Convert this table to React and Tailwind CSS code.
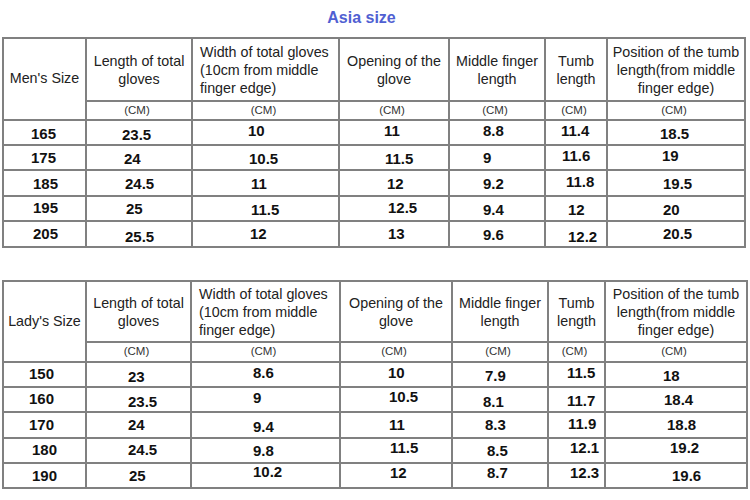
import React from 'react';

// each data cell: [value, padding-left, vertical nudge]
const men = {
  label: "Men's Size",
  cols: 'grid-cols-[81px_104px_145px_108px_94px_60px_136px]',
  rows: 'grid-rows-[61px_17px_23px_23px_24px_23px_24px]',
  data: [
    [['165', 27, 1], ['23.5', 35, 2], ['10', 55, -2], ['11', 44, -2], ['8.8', 33, -2], ['11.4', 15, -2], ['18.5', 52, 1]],
    [['175', 27, 0], ['24', 37, 1], ['10.5', 56, 1], ['11.5', 45, 1], ['9', 33, 0], ['11.6', 16, -2], ['19', 54, -2]],
    [['185', 29, 0], ['24.5', 38, 0], ['11', 58, 0], ['12', 47, 0], ['9.2', 33, 0], ['11.8', 20, -2], ['19.5', 55, 0]],
    [['195', 29, -1], ['25', 39, 0], ['11.5', 58, 1], ['12.5', 48, -1], ['9.4', 33, 1], ['12', 22, 1], ['20', 55, 1]],
    [['205', 29, -1], ['25.5', 38, 2], ['12', 57, -1], ['13', 48, -1], ['9.6', 33, 0], ['12.2', 22, 2], ['20.5', 55, -1]],
  ],
};

const lady = {
  label: "Lady's Size",
  cols: 'grid-cols-[81px_103px_147px_110px_94px_55px_140px]',
  rows: 'grid-rows-[59px_18px_23px_23px_24px_23px_23px]',
  data: [
    [['150', 25, -1], ['23', 41, 2], ['8.6', 61, -2], ['10', 47, -2], ['7.9', 32, 1], ['11.5', 18, -2], ['18', 57, 1]],
    [['160', 25, -1], ['23.5', 41, 2], ['9', 61, -2], ['10.5', 48, -3], ['8.1', 30, 2], ['11.7', 18, 1], ['18.4', 58, 0]],
    [['170', 25, -1], ['24', 41, -1], ['9.4', 61, 1], ['11', 48, -1], ['8.3', 32, -1], ['11.9', 19, -2], ['18.8', 61, -1]],
    [['180', 28, -1], ['24.5', 41, -1], ['9.8', 61, 0], ['11.5', 49, -3], ['8.5', 34, 0], ['12.1', 21, -3], ['19.2', 64, -3]],
    [['190', 28, 0], ['25', 42, 0], ['10.2', 61, -4], ['12', 49, -3], ['8.7', 34, -3], ['12.3', 21, -3], ['19.6', 66, 0]],
  ],
};

const heads = [
  { lines: ['Length of total', 'gloves'], cls: 'items-center text-center' },
  { lines: ['Width of total gloves', '(10cm from middle', 'finger edge)'], cls: 'items-start text-left pl-[7px]' },
  { lines: ['Opening of the', 'glove'], cls: 'items-center text-center' },
  { lines: ['Middle finger', 'length'], cls: 'items-center text-center' },
  { lines: ['Tumb', 'length'], cls: 'items-center text-center' },
  { lines: ['Position of the tumb', 'length(from middle', 'finger edge)'], cls: 'items-center text-center' },
];

function SizeTable({ t, className }) {
  return (
    <div className={`grid ${t.cols} ${t.rows} gap-[2px] p-[2px] bg-[#808080] w-max ml-[2px] ${className}`}>
      <div className="row-span-2 bg-white flex items-center justify-center text-[14.3px] text-[#222] whitespace-nowrap">
        {t.label}
      </div>
      {heads.map((h) => (
        <div
          key={h.lines[0]}
          className={`bg-white flex flex-col justify-center text-[14.3px] leading-[18px] text-[#222] whitespace-nowrap ${h.cls}`}
        >
          {h.lines.map((l) => (
            <span key={l}>{l}</span>
          ))}
        </div>
      ))}
      {heads.map((h) => (
        <div key={'cm' + h.lines[0]} className="bg-white flex items-center justify-center text-[11.5px] text-[#333] pr-[4px]">
          (CM)
        </div>
      ))}
      {t.data.map((row, ri) =>
        row.map(([v, pl, dy], ci) => (
          <div key={ri + '-' + ci} className="bg-white flex items-center">
            <span
              className="text-[15px] leading-[15px] font-bold text-[#111]"
              style={{ paddingLeft: pl, transform: `translateY(${dy}px)` }}
            >
              {v}
            </span>
          </div>
        ))
      )}
    </div>
  );
}

export default function App() {
  return (
    <div className="w-[750px] h-[500px] bg-white overflow-hidden font-['Liberation_Sans',Arial,sans-serif]">
      <div className="pt-[9px] pr-[27px] text-center text-[16px] leading-[18px] font-bold text-[#5060d2]">
        Asia size
      </div>
      <SizeTable t={men} className="mt-[10px]" />
      <SizeTable t={lady} className="mt-[32px]" />
    </div>
  );
}
